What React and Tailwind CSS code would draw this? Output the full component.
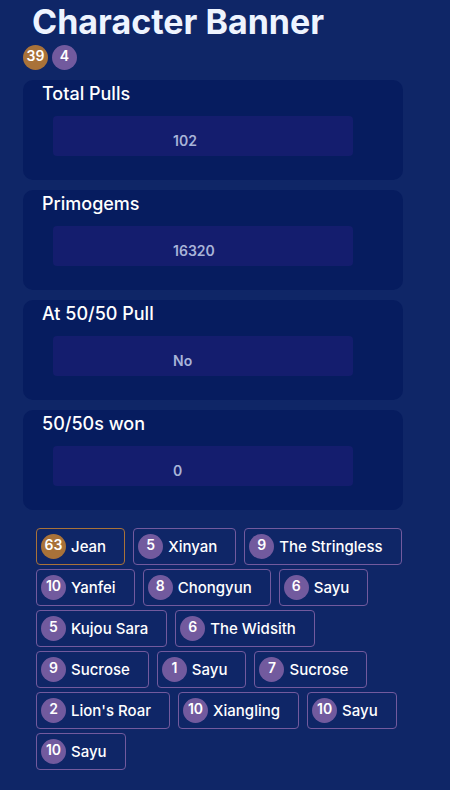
const stats = [
  { label: 'Total Pulls', value: '102' },
  { label: 'Primogems', value: '16320' },
  { label: 'At 50/50 Pull', value: 'No' },
  { label: '50/50s won', value: '0' },
];

const pulls = [
  { n: 63, name: 'Jean', gold: true },
  { n: 5, name: 'Xinyan' },
  { n: 9, name: 'The Stringless' },
  { n: 10, name: 'Yanfei' },
  { n: 8, name: 'Chongyun' },
  { n: 6, name: 'Sayu' },
  { n: 5, name: 'Kujou Sara' },
  { n: 6, name: 'The Widsith' },
  { n: 9, name: 'Sucrose' },
  { n: 1, name: 'Sayu' },
  { n: 7, name: 'Sucrose' },
  { n: 2, name: "Lion's Roar" },
  { n: 10, name: 'Xiangling' },
  { n: 10, name: 'Sayu' },
  { n: 10, name: 'Sayu' },
];

function Pity({ n, gold }) {
  return (
    <span
      className={
        'w-[25px] h-[25px] shrink-0 rounded-full flex items-center justify-center text-[14px] font-semibold text-white leading-none pb-[3px] ' +
        (gold ? 'bg-[#a97239]' : 'bg-[#725a9e]')
      }
    >
      {n}
    </span>
  );
}

export default function App() {
  return (
    <div className="min-h-[790px] bg-[#0f2667] text-white pb-4" style={{ fontFamily: 'Inter, "Noto Sans", sans-serif' }}>
      {/* HEADER */}
      <h1 className="pl-[32px] pt-[1px] text-[34px] font-bold leading-[42px] text-[#eef4ff]">
        Character Banner
      </h1>
      <div className="flex gap-[4px] pl-[23px] mt-[2px]">
        <Pity n={39} gold />
        <Pity n={4} />
      </div>

      {/* STATS */}
      <div className="flex flex-col gap-[10px] mt-[10px] pl-[23px] w-[403px]">
        {stats.map(s => (
          <div key={s.label} className="bg-[#061c5f] rounded-[10px] h-[100px] pt-[2px]">
            <p className="pl-[19px] text-[18px] font-medium leading-[24px]">{s.label}</p>
            <div className="ml-[30px] mt-[10px] w-[300px] h-[40px] bg-[#141d6e] rounded-[4px] pl-[120px] pt-[15px] text-[14px] font-semibold text-[#a8b4d8] leading-[20px]">
              {s.value}
            </div>
          </div>
        ))}
      </div>

      {/* PULL HISTORY */}
      <div className="flex flex-wrap gap-x-[8px] gap-y-[4px] mt-[18px] pl-[36px] pr-[46px]">
        {pulls.map((p, i) => (
          <div
            key={i}
            className={
              'flex items-center gap-[5px] h-[37px] border rounded-[4px] pl-[4px] pr-[18px] ' +
              (p.gold ? 'border-[#a97239]' : 'border-[#725a9e]')
            }
          >
            <Pity n={p.n} gold={p.gold} />
            <span className="text-[15px] font-medium leading-none pb-[1px]">{p.name}</span>
          </div>
        ))}
      </div>
    </div>
  );
}
